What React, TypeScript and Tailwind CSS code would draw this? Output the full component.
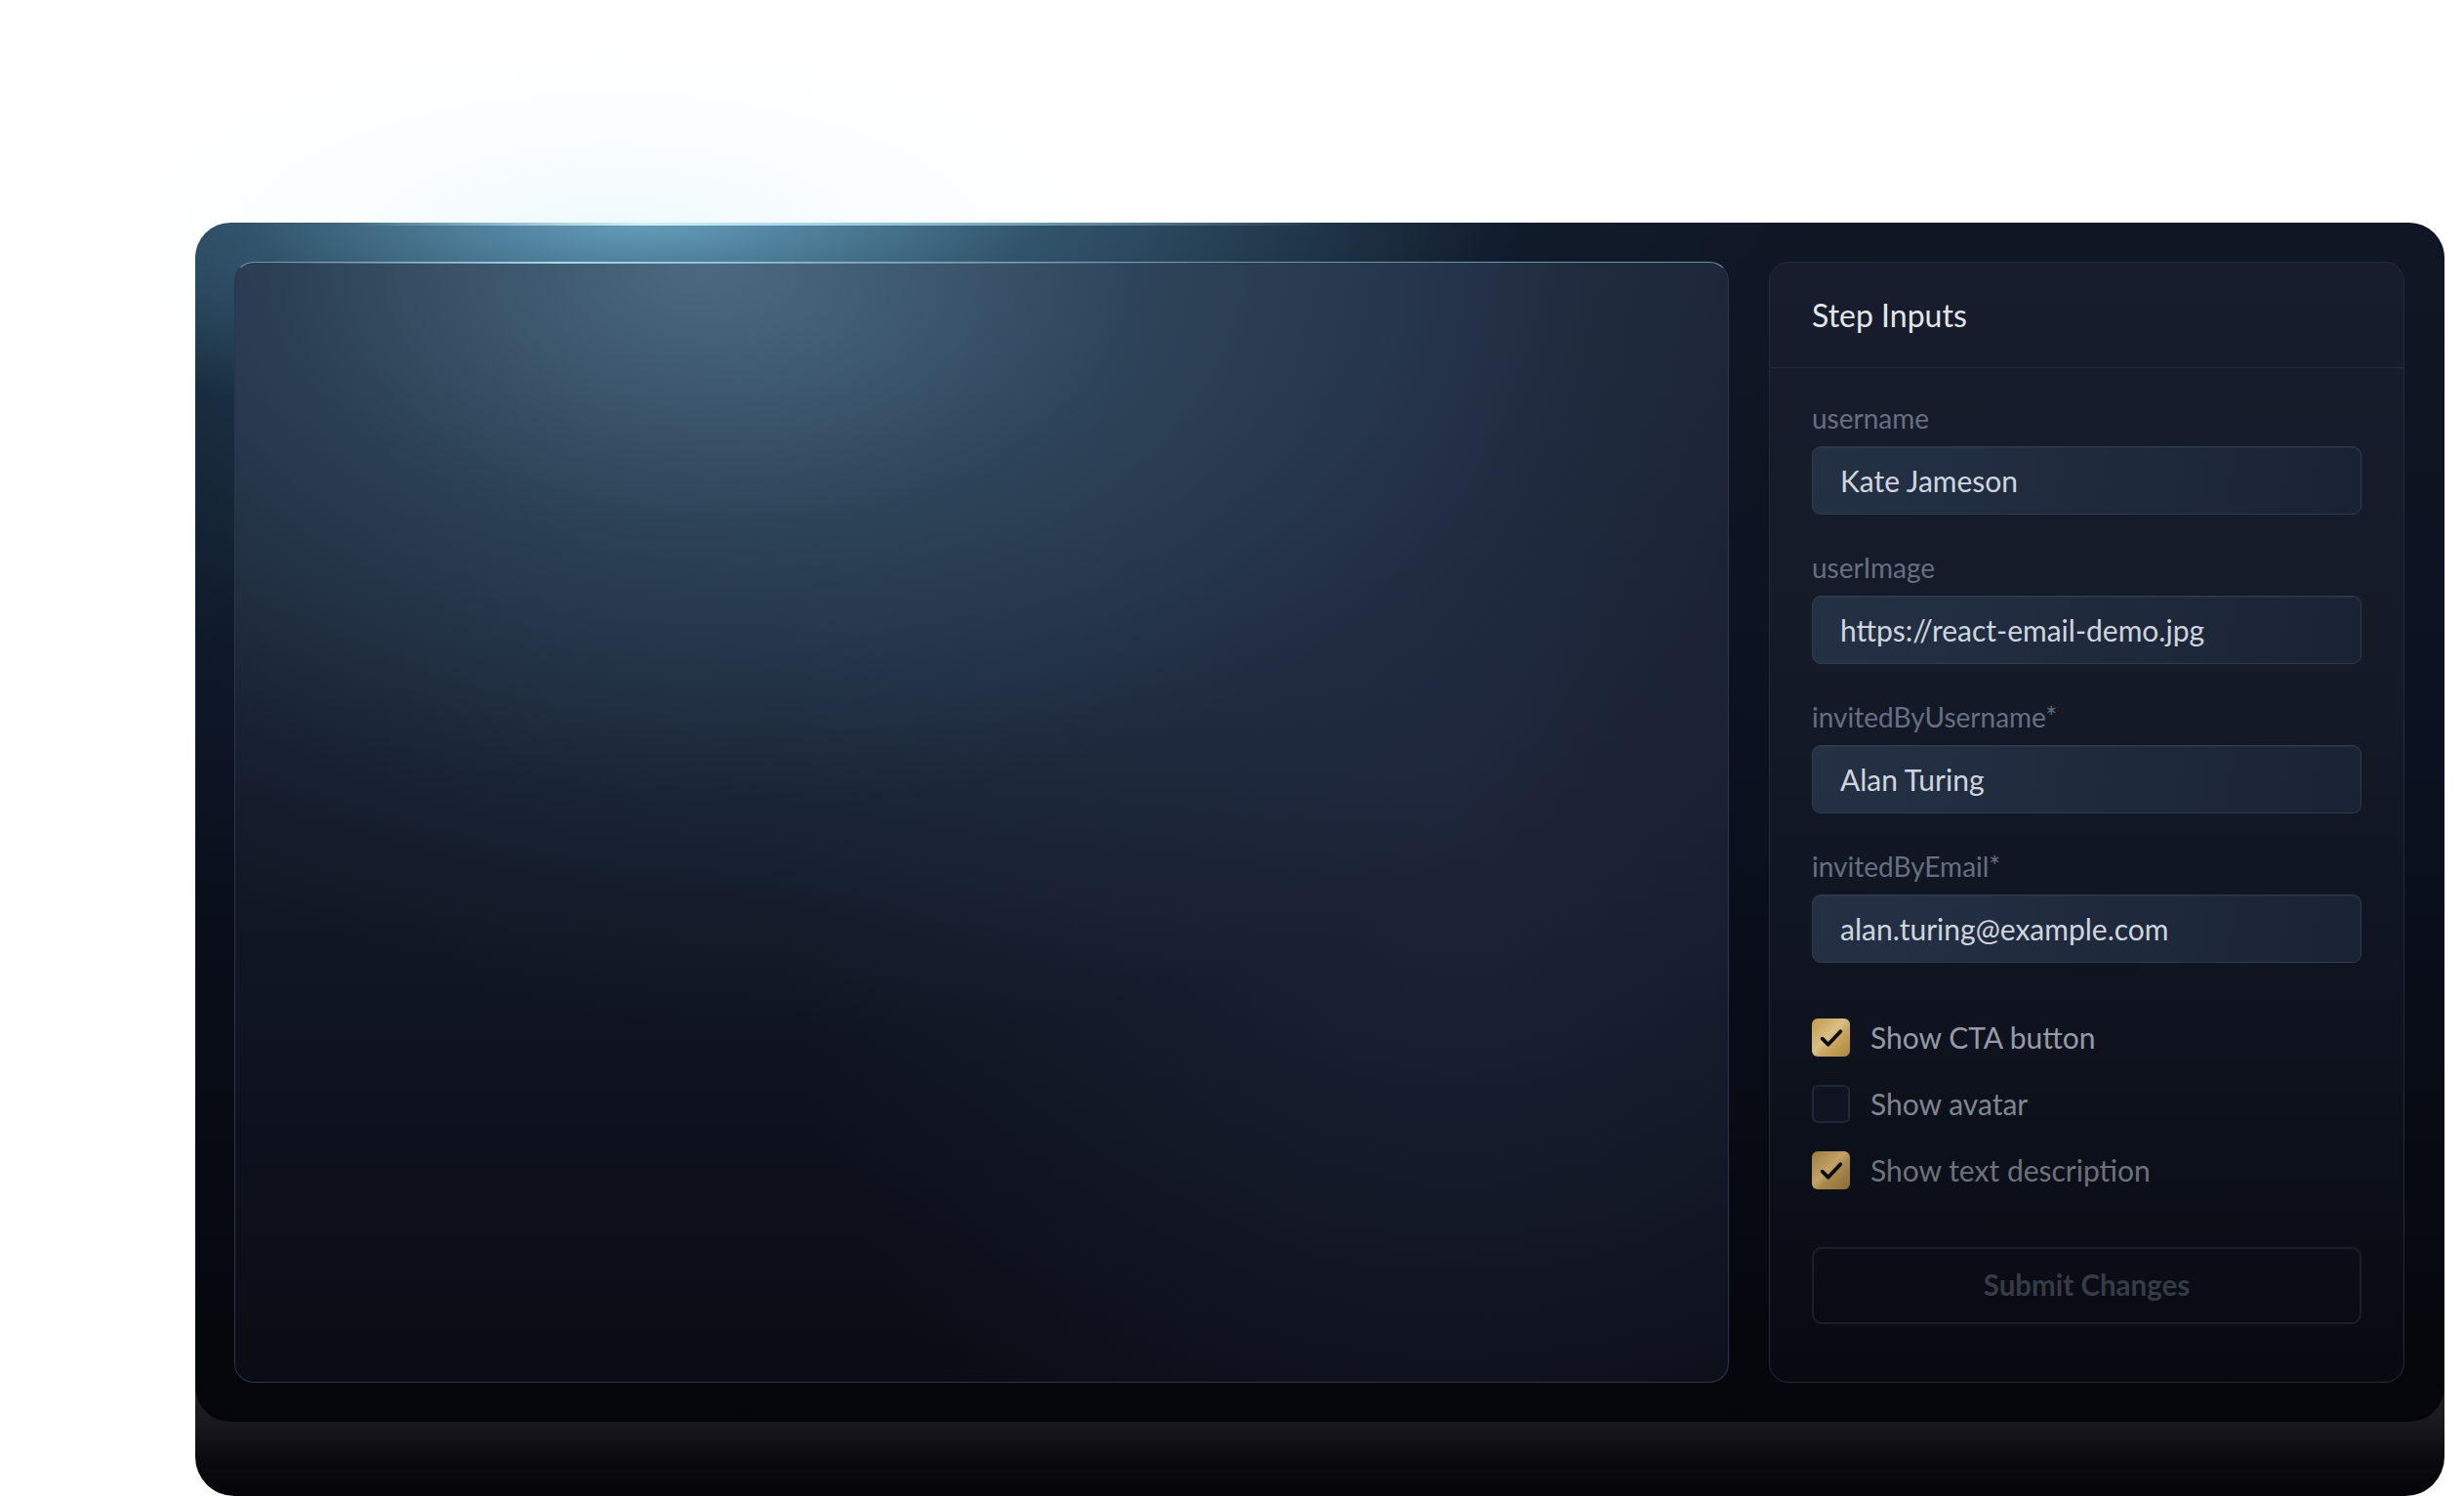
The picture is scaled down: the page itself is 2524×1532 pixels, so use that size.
const font = { fontFamily: 'Lato, "Noto Sans", sans-serif' };

interface FieldProps {
  label: string;
  value: string;
}

const Field: React.FC<FieldProps> = ({ label, value }) => (
  <div className="flex flex-col">
    <label className="text-[28px] leading-[32px] text-[#667080] mb-[13px]">
      {label}
    </label>
    <div className="h-[70px] flex items-center px-[28px] rounded-[9px] border border-[#2f3b4e] bg-[linear-gradient(100deg,#243145_0%,#1e293b_60%,#1a2334_100%)] shadow-[inset_0_1px_0_rgba(255,255,255,0.04)]">
      <span className="text-[30px] text-[#cfd5de]">{value}</span>
    </div>
  </div>
);

interface CheckProps {
  label: string;
  checked: boolean;
  tone: string;
  dim?: boolean;
}

const CheckRow: React.FC<CheckProps> = ({ label, checked, tone, dim }) => (
  <div className="flex items-center gap-[21px] h-[39px]">
    {checked ? (
      <div
        className={
          dim
            ? 'w-[39px] h-[39px] rounded-[6px] flex items-center justify-center bg-[linear-gradient(135deg,#9e7c3e_0%,#c2a266_45%,#a8884a_60%,#8a6c34_100%)]'
            : 'w-[39px] h-[39px] rounded-[6px] flex items-center justify-center bg-[linear-gradient(135deg,#c39a47_0%,#d9be86_45%,#c8a45c_62%,#a9853f_100%)]'
        }
      >
        <svg width="32" height="32" viewBox="0 0 24 24" fill="none">
          <path
            d="M5 12.5l4.5 4.5L19 7"
            stroke="#0a0a0c"
            strokeWidth="2.8"
            strokeLinecap="round"
            strokeLinejoin="round"
          />
        </svg>
      </div>
    ) : (
      <div className="w-[39px] h-[39px] rounded-[6px] border-2 border-[#1e2838] bg-[#0f1420]" />
    )}
    <span className={'text-[30px] ' + tone}>{label}</span>
  </div>
);

const StepInputs: React.FC = () => (
  <div className="w-[651px] h-full rounded-[20px] border border-[#232b3a] flex flex-col bg-[linear-gradient(180deg,#171d2c_0%,#141a28_35%,#0f1420_65%,#080a12_100%)]">
    <div className="h-[108px] flex items-center px-[43px] border-b border-[#232a38]">
      <h2 className="text-[32px] text-[#e3e7ed]">Step Inputs</h2>
    </div>
    <div className="flex flex-col px-[43px] pt-[35px]">
      <div className="flex flex-col gap-[38px]">
        <Field label="username" value="Kate Jameson" />
        <Field label="userImage" value="https://react-email-demo.jpg" />
        <Field label="invitedByUsername*" value="Alan Turing" />
        <Field label="invitedByEmail*" value="alan.turing@example.com" />
      </div>
      <div className="flex flex-col gap-[29px] mt-[57px]">
        <CheckRow label="Show CTA button" checked tone="text-[#959ca7]" />
        <CheckRow label="Show avatar" checked={false} tone="text-[#80868f]" />
        <CheckRow
          label="Show text description"
          checked
          dim
          tone="text-[#6c727c]"
        />
      </div>
      <button className="mt-[59px] h-[79px] rounded-[10px] border-2 border-[#1a1f2b] text-[29.5px] font-bold text-[#363b46]">
        Submit Changes
      </button>
    </div>
  </div>
);

export default function App() {
  return (
    <div
      className="relative w-full h-[1532px] bg-white overflow-hidden"
      style={font}
    >
      {/* glow above the screen */}
      <div className="absolute left-[160px] top-[20px] w-[1040px] h-[420px] bg-[radial-gradient(ellipse_50%_50%_at_45%_55%,rgba(220,243,251,0.5)_0%,rgba(234,248,252,0.3)_45%,rgba(255,255,255,0)_100%)]" />

      <div className="relative pl-[200px] pt-[228px]">
        <div className="relative w-[2304px] h-[1304px] rounded-b-[40px] overflow-hidden bg-[linear-gradient(180deg,rgba(0,0,0,0)_0px,rgba(0,0,0,0)_1180px,#24242a_1180px,#16161c_1236px,#0a0a0e_1268px,#060609_100%)]">
          <div className="relative h-[1228px] rounded-[36px] p-[40px] flex gap-[41px] bg-[radial-gradient(ellipse_900px_200px_at_460px_0px,rgba(120,185,215,0.75)_0%,rgba(80,130,160,0.4)_45%,rgba(0,0,0,0)_100%),radial-gradient(ellipse_1600px_900px_at_450px_0px,rgba(45,88,112,0.8)_0%,rgba(20,38,56,0.35)_55%,rgba(0,0,0,0)_80%),linear-gradient(180deg,#0f1624_0%,#0b1120_45%,#070a12_80%,#05060b_100%)]">
            {/* lit top edge */}
            <div className="absolute left-[160px] top-0 w-[1000px] h-[3px] bg-[linear-gradient(90deg,rgba(190,235,250,0)_0%,rgba(210,245,255,0.95)_30%,rgba(170,225,245,0.75)_55%,rgba(120,180,210,0)_100%)]" />

            <div className="relative w-[1531px] h-full rounded-[20px] border border-[#2c3648] border-t-[#6f95ab] bg-[radial-gradient(ellipse_900px_560px_at_480px_0px,rgba(105,145,170,0.55)_0%,rgba(70,105,130,0.28)_50%,rgba(0,0,0,0)_100%),radial-gradient(ellipse_1300px_950px_at_600px_80px,rgba(50,80,105,0.55)_0%,rgba(0,0,0,0)_75%),radial-gradient(ellipse_700px_900px_at_1250px_550px,rgba(38,46,72,0.55)_0%,rgba(0,0,0,0)_100%),linear-gradient(180deg,#1c2536_0%,#141b2a_45%,#0e121e_75%,#0a0c15_100%)]">
              <div className="absolute left-[40px] -top-px w-[960px] h-[2px] bg-[linear-gradient(90deg,rgba(160,215,240,0)_0%,rgba(175,225,245,0.9)_30%,rgba(150,200,225,0.6)_60%,rgba(120,160,185,0)_100%)]" />
            </div>

            <StepInputs />
          </div>
        </div>
      </div>
    </div>
  );
}
